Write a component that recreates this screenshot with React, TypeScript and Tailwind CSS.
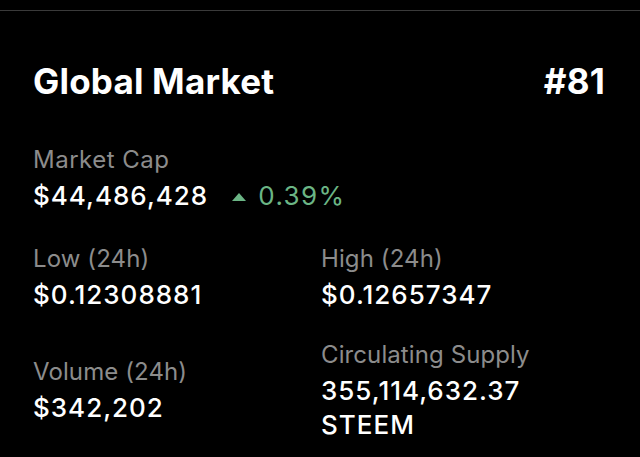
const stats = [
  { label: 'Low (24h)', value: ['$0.12308881'] },
  { label: 'High (24h)', value: ['$0.12657347'] },
  { label: 'Volume (24h)', value: ['$342,202'] },
  { label: 'Circulating Supply', value: ['355,114,632.37', 'STEEM'] },
];

function Stat({ label, value }: { label: string; value: string[] }) {
  return (
    <div>
      <div className="text-[24px] leading-[28px] tracking-[0.1px] text-[#8c8c8c]">{label}</div>
      <div className="mt-[5px] text-[26px] leading-[34px] tracking-[1px] font-medium text-white">
        {value.map((v) => (
          <div key={v}>{v}</div>
        ))}
      </div>
    </div>
  );
}

export default function App() {
  return (
    <div
      className="h-[457px] w-[640px] overflow-hidden bg-black"
      style={{ fontFamily: 'Inter, "Noto Sans", sans-serif' }}
    >
      <div className="h-[10px]" />
      <div className="h-px bg-[#3a3a3a]" />

      <div className="pl-[33px] pr-[35px]">
        <div className="mt-[49px] flex items-center justify-between text-[35px] leading-[42px] tracking-[0.2px] font-bold text-white">
          <span>Global Market</span>
          <span>#81</span>
        </div>

        {/* market cap */}
        <div className="mt-[44px]">
          <div className="text-[24px] leading-[28px] tracking-[0.5px] text-[#8c8c8c]">Market Cap</div>
          <div className="mt-[5px] flex items-center text-[26px] leading-[34px] tracking-[1px] font-medium text-white">
            <span>$44,486,428</span>
            <span className="ml-[24px] flex items-center gap-[12px] text-[#6bb585]">
              <svg width="14" height="8" viewBox="0 0 14 8" className="mt-[1px]">
                <path d="M7 0 L14 8 L0 8 Z" fill="#6bb585" />
              </svg>
              <span className="font-normal tracking-[1.4px]">0.39%</span>
            </span>
          </div>
        </div>

        <div className="mt-[32px] grid grid-cols-[288px_1fr] items-center gap-y-[29px]">
          {stats.map((s) => (
            <Stat key={s.label} label={s.label} value={s.value} />
          ))}
        </div>
      </div>
    </div>
  );
}
